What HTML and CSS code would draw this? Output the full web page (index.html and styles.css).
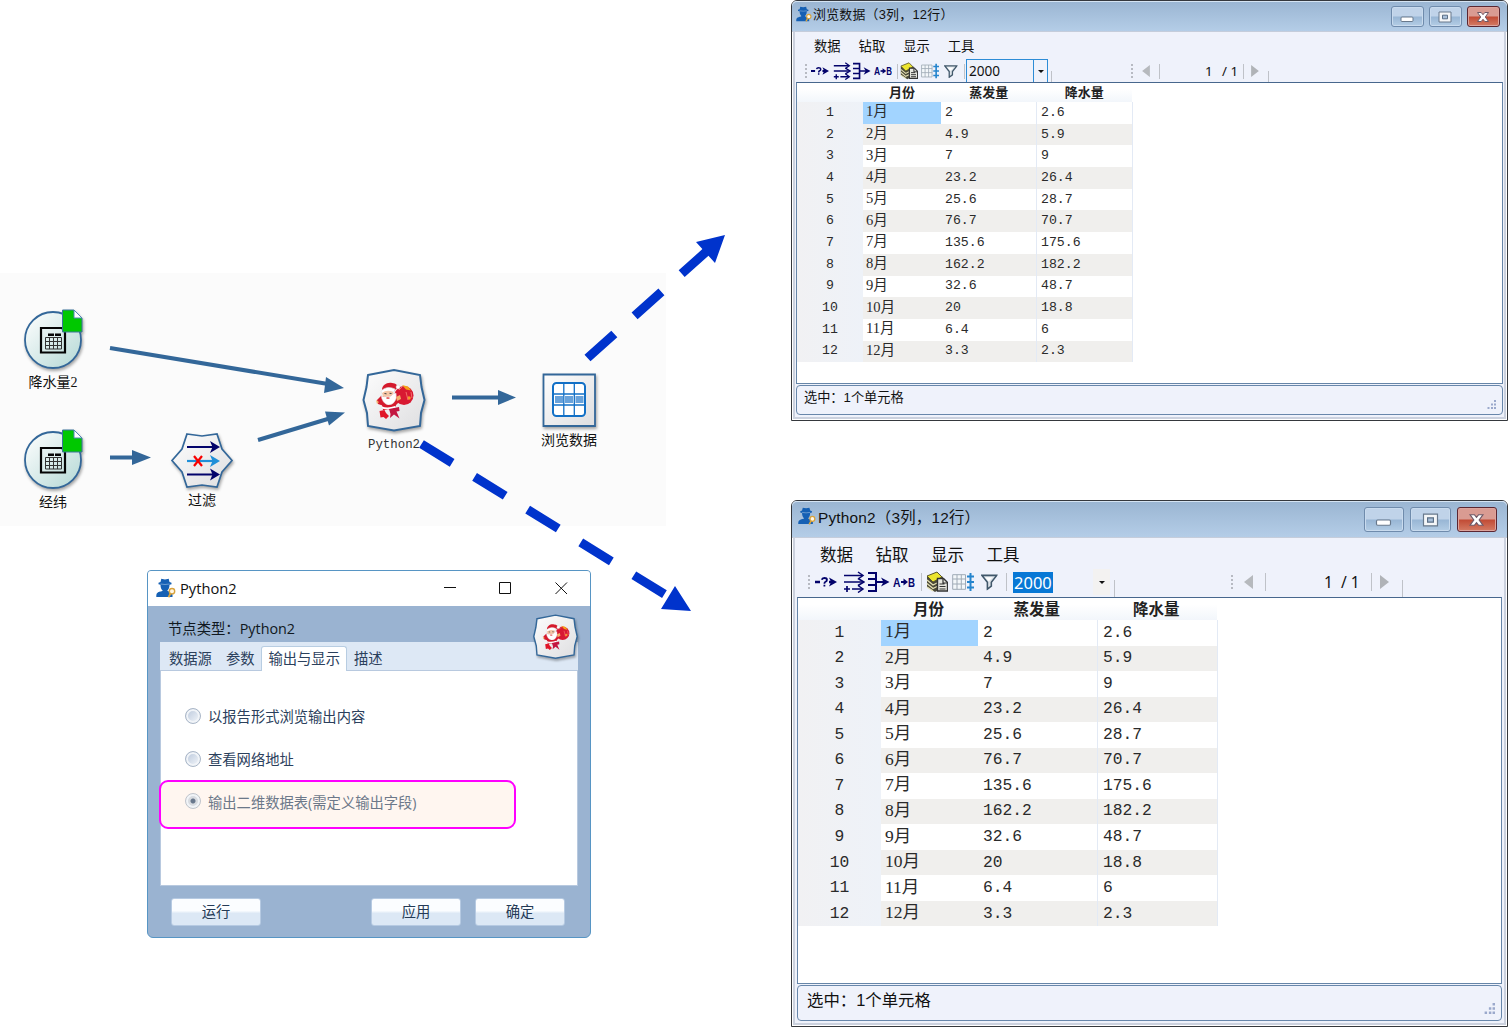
FILE: index.html
```html
<!DOCTYPE html>
<html lang="zh-CN">
<head>
<meta charset="utf-8">
<title>Python2</title>
<link rel="stylesheet" href="styles.css">
</head>
<body>
<svg class="defs" width="0" height="0" aria-hidden="true">
  <defs>
    <linearGradient id="gNode" x1="0" y1="0" x2="1" y2="1"><stop offset="0" stop-color="#fdfdfd"/><stop offset="1" stop-color="#dedee0"/></linearGradient>
    <linearGradient id="gRound" x1="0" y1="0" x2="1" y2="1"><stop offset="0.1" stop-color="#f8fbfb"/><stop offset="1" stop-color="#b4d8d5"/></linearGradient>
    <symbol id="agent" viewBox="0 0 20 20">
      <path d="M4.500 4 5.300.8 9 1.500 12.700.8l.8 3.200 2 .7v1.500l-2 .5c0 2.800-.8 4.500-2 5.600v.7c2.500.8 4.800 1.200 5 3.500V19H.3c0-4 .7-5 6.200-6v-.7c-1.200-1.100-2-2.800-2-5.600l-2-.5V4.700z" fill="#1560b4"/>
      <path d="M4.500 6q4.500 1 9 0" fill="none" stroke="#8fb6de" stroke-width=".7"/>
      <circle cx="16" cy="13.200" r="2.700" fill="#fff7e6" stroke="#d9a33c" stroke-width="1.400"/>
      <path d="m14.500 15.500-2 3.700" stroke="#d9a33c" stroke-width="1.800"/>
    </symbol>
    <symbol id="santa" viewBox="0 0 66 66">
      <path d="M7 8 33 3l26 5 1.500 12L63.500 33 60 46l-1 13-26 4.500L7 59 6 46 2.500 33 5.500 20z" fill="url(#gNode)" stroke="#336799" stroke-width="2"/>
      <circle cx="43" cy="28.500" r="9.500" fill="#d81932"/>
      <path d="m41 18 6 1.500 3 4-5-1z" fill="#f5a21a"/><circle cx="48" cy="31" r="1.800" fill="#f59a2a"/>
      <path d="m38 23 3-3M45 25l2 8M50 25l1 6" stroke="#f46b68" stroke-width="1"/>
      <path d="M21 23c0-5 5-8 10-7 4 0 6 3 7 5l-3 1-2 2zM20 29l-4 4 1 4 6 2 11 0 6-6-4-4z" fill="#d51a2d"/>
      <path d="M20 24q6-6 14-2l-1 3q-6-2-12 2z" fill="#fff" stroke="#ddd" stroke-width=".6"/>
      <path d="M21 26q5-4 11-1l1 6h-10z" fill="#f6c6a5"/>
      <path d="M20 28q3 3 6 1.500 4 1 6-2.500l3-1q1 5-1 8-2 4-7 4-6-2-7-10z" fill="#fff" stroke="#dcc" stroke-width=".5"/>
      <path d="m23.500 26.500 2 .3M28.500 26.300l2 .2" stroke="#444"/><path d="m25.500 31 3 .2" stroke="#d33" stroke-width="1.300"/>
      <circle cx="37" cy="20" r="2" fill="#fff" stroke="#ccc" stroke-width=".4"/>
      <path d="m35 30 4-2 1 4-4 2zM15 33l3 2-2 2z" fill="#f3b16e"/>
      <path d="M21 38h14l-2 5H22z" fill="#d51a2d"/>
      <path d="M21 39.500q6 2 13-.5l1 2q-8 3-14 .5z" fill="#fff"/>
      <path d="M18.500 44l5-1 1.500 3 3 3-3 3-2.500-2-3 .5z" fill="#e01628"/><path d="M28 42l10-2 .5 4-3 .5 3 7-5.500-4-4 3.500.5-4z" fill="#c31640"/>
    </symbol>
    <symbol id="source" viewBox="0 0 62 64">
      <circle cx="30" cy="33" r="28" fill="url(#gRound)" stroke="#336799" stroke-width="1.800"/>
      <path d="M18 21h24v24.500H18z" fill="none" stroke="#050505" stroke-width="2.200"/>
      <path d="M25 26.500h6v2.500h-6zM32 26.500h6v2.500h-6zM37 21h5v4z" fill="#050505"/>
      <path d="M22.500 30.500h16v11.500h-16zM22.500 34.500h16M22.500 38.500h16M26.500 30.500v11.500M30.500 30.500v11.500M34.500 30.500v11.500" fill="none" stroke="#333"/>
      <path d="M39.500 3h11.500l8 8v14h-19.500z" fill="#00c800" stroke="#3c749c"/><path d="M51 3v8h8z" fill="#fff" stroke="#4d87b4"/>
    </symbol>
    <symbol id="t1" viewBox="0 0 22 20"><path d="M0 10h5M14 10h3" stroke="#03036b" stroke-width="2.600"/><path d="M14 5.500 22 10l-8 4.500 2-4.500z" fill="#03036b"/><path d="M6.800 7.800Q7.200 6 9.300 6c3.400 0 3.400 2.800.9 4-.7.400-.8.800-.8 1.700M9.400 12.800v1.800" fill="none" stroke="#03036b" stroke-width="1.800"/></symbol>
    <symbol id="t2" viewBox="0 0 22 20"><path d="M1 3.500h18M1 10h19M9 17h10M1 17h6M4 14v6" fill="none" stroke="#03036b" stroke-width="1.700"/><path d="m15 0 5 3.500-5 3.500M15 6.500l6 3.500-6 3.500M15 13.500l5 3.500-5 3.500" fill="none" stroke="#03036b" stroke-width="1.500"/></symbol>
    <symbol id="t3" viewBox="0 0 22 20"><path d="M0 1h8v18H0M0 7h8M0 13h8M8 10h10" fill="none" stroke="#03036b" stroke-width="2"/><path d="m13 5.500 8.500 4.500-8.500 4.500 2.500-4.500z" fill="#03036b"/></symbol>
    <symbol id="t4" viewBox="0 0 22 20"><path d="M8 10h4" stroke="#03036b" stroke-width="2"/><path d="m10.500 6.500 4.500 3.500-4.500 3.500z" fill="#03036b"/><text class="ab" x="0" y="15" textLength="7.500" lengthAdjust="spacingAndGlyphs">A</text><text class="ab" x="15" y="15" textLength="7" lengthAdjust="spacingAndGlyphs">B</text></symbol>
    <symbol id="t5" viewBox="0 0 22 20"><path d="m1 5 8-4 8 4v10l-8 5-8-5z" fill="#4b4938"/><path d="m1 4 10-4 5 5-9 5z" fill="#ece52f" stroke="#59562c"/><path d="m1 8 6 5 4-2M1 11.500l6 5 4-2M1 15l6 4" fill="none" stroke="#e4dfb2" stroke-width="1.300"/><path d="M11.500 6.500h6l4 4v8.500h-10z" fill="#e6e6df" stroke="#333" stroke-width="1.400"/><path d="M17 7v4h4M13.500 12h5M13.500 14.500h6M13.500 17h6" fill="none" stroke="#333" stroke-width="1.200"/></symbol>
    <symbol id="t6" viewBox="0 0 22 20"><path d="M.7 2.700h12.800v14.600H.7zM.7 7h13M.7 12h13M5 2.700v14.600M9.300 2.700v14.600" fill="#f3f7fa" stroke="#9faab6"/><path d="M18.500 1v18M15 4.500h7M15 10h7M15 15.500h7" stroke="#2685cd" stroke-width="2"/></symbol>
    <symbol id="t7" viewBox="0 0 17 17"><path d="M1 2h15l-5.500 7v4l-4 3V9z" fill="#dce3e9" stroke="#41586b" stroke-width="1.600"/><path d="M4 4h8l-4 4z" fill="#fff"/></symbol>
    <symbol id="prev" viewBox="0 0 9 14"><path d="M9 0v14L0 7z" fill="#b6b9bd"/></symbol>
    <symbol id="next" viewBox="0 0 9 14"><path d="M0 0v14l9-7z" fill="#b0b3b7"/></symbol>
    <symbol id="min" viewBox="0 0 14 12"><rect x="1" y="6" width="12" height="4.500" rx="1" fill="#fff" stroke="#68798c"/></symbol>
    <symbol id="max" viewBox="0 0 14 12"><path d="M1 1h12v10H1z" fill="#f4f6f8" stroke="#68798c"/><path d="M4.500 4.200h5v3.600h-5z" fill="#a9c0da" stroke="#5b6f86"/></symbol>
    <symbol id="cls" viewBox="0 0 14 12"><path d="M1.500 1.500h3.700L7 3.700l1.800-2.200h3.700L9.300 6l3.200 4.500H8.800L7 8.300l-1.800 2.200H1.500L4.700 6z" fill="#fff" stroke="#6d5866"/></symbol>
    <symbol id="size" viewBox="0 0 9 9"><path d="M7 0h2v2H7zM4 3.500h2v2H4zM7 3.500h2v2H7zM.5 7h2v2h-2zM4 7h2v2H4zM7 7h2v2H7z" fill="#9ba9cc"/></symbol>
  </defs>
</svg>

<main class="desk">
  <section class="flow">
    <div class="node n-rain"><svg width="62" height="64"><use href="#source"/></svg><span>降水量2</span></div>
    <div class="node n-geo"><svg width="62" height="64"><use href="#source"/></svg><span>经纬</span></div>
    <div class="node n-filter">
      <svg width="66" height="60" viewBox="0 0 66 60"><path d="M18 3l15 2 15-2 5 15 10 11.500L53 41l-5 15-15-2-15 2-5-15L3 29.500 13 18z" fill="url(#gNode)" stroke="#336799" stroke-width="1.700"/><path d="M18 16h27M18 43.500h27" stroke="#03036b" stroke-width="2.200"/><path d="m41 10 10 6-10 6 2.500-6zM41 37.500l10 6-10 6 2.500-6z" fill="#03036b"/><path d="M18 30h27" stroke="#1f8fd8" stroke-width="2.200"/><path d="m41 24 10 6-10 6 2.500-6z" fill="#1f8fd8"/><path d="m25 25 8 10M33 25l-8 10" stroke="#f80000" stroke-width="2.200"/></svg>
      <span>过滤</span>
    </div>
    <div class="node n-python"><svg width="66" height="66"><use href="#santa"/></svg><span class="latin">Python2</span></div>
    <div class="node n-browse">
      <svg width="56" height="56" viewBox="0 0 56 56"><path d="M2.500 2.500h51.500v51.500H2.500z" fill="url(#gNode)" stroke="#336799" stroke-width="1.800"/><rect x="12" y="11" width="32" height="33" rx="3.500" fill="#fff" stroke="#1270c6" stroke-width="2"/><path d="M14 24h8v7h-8zM24 24h8v7h-8zM34.500 24h8v7h-8z" fill="#68a2da"/><path d="M12 22h32M12 33h32M22.800 11v33M33.300 11v33" stroke="#1270c6" stroke-width="1.300"/></svg>
      <span>浏览数据</span>
    </div>
  </section>

  <section class="dialog">
    <header class="d-title"><svg width="20" height="20"><use href="#agent"/></svg><h1>Python2</h1>
      <svg class="d-ctl" width="124" height="14" viewBox="0 0 124 14"><path d="M0 6.500h12M55.500 1.500h11v11h-11zM111.500 1.500 123 13M123 1.500l-11.500 11.500" fill="none" stroke="#111"/></svg>
    </header>
    <div class="d-body">
      <p class="d-type">节点类型：Python2</p>
      <nav class="tabs"><span>数据源</span><span>参数</span><span class="on">输出与显示</span><span>描述</span></nav>
      <div class="pane">
        <label class="opt"><i class="radio"></i>以报告形式浏览输出内容</label>
        <label class="opt"><i class="radio"></i>查看网络地址</label>
        <label class="opt picked"><i class="radio sel"></i>输出二维数据表(需定义输出字段)</label>
      </div>
      <footer class="d-foot"><button>运行</button><button class="apply">应用</button><button>确定</button></footer>
    </div>
    <svg class="d-badge" width="47" height="47"><use href="#santa"/></svg>
  </section>

  <section class="win small">
    <header class="w-title"><svg class="w-ico"><use href="#agent"/></svg><h2>浏览数据（3列，12行）</h2><div class="ctl"><b><svg><use href="#min"/></svg></b><b><svg><use href="#max"/></svg></b><b class="close"><svg><use href="#cls"/></svg></b></div></header>
    <nav class="menu"><span>数据</span><span>钻取</span><span>显示</span><span>工具</span></nav>
    <div class="tools">
      <i class="grip"></i><svg class="ti"><use href="#t1"/></svg><svg class="ti"><use href="#t2"/></svg><svg class="ti"><use href="#t3"/></svg><svg class="ti"><use href="#t4"/></svg><i class="sep"></i><svg class="ti"><use href="#t5"/></svg><svg class="ti"><use href="#t6"/></svg><svg class="tf"><use href="#t7"/></svg><i class="sep"></i>
      <div class="combo"><span>2000</span><i class="drop"></i></div><i class="sep low"></i><i class="grip"></i><svg class="ar"><use href="#prev"/></svg><i class="sep"></i><span>1</span><span>/ 1</span><i class="sep"></i><svg class="ar"><use href="#next"/></svg><i class="sep low"></i>
    </div>
    <div class="sheet"><table>
      <colgroup><col class="c0"><col class="c1"><col class="c2"><col class="c2"></colgroup>
      <thead><tr><th></th><th>月份</th><th>蒸发量</th><th>降水量</th></tr></thead>
      <tbody>
        <tr><th>1</th><td class="cur">1月</td><td>2</td><td>2.6</td></tr>
        <tr><th>2</th><td>2月</td><td>4.9</td><td>5.9</td></tr>
        <tr><th>3</th><td>3月</td><td>7</td><td>9</td></tr>
        <tr><th>4</th><td>4月</td><td>23.2</td><td>26.4</td></tr>
        <tr><th>5</th><td>5月</td><td>25.6</td><td>28.7</td></tr>
        <tr><th>6</th><td>6月</td><td>76.7</td><td>70.7</td></tr>
        <tr><th>7</th><td>7月</td><td>135.6</td><td>175.6</td></tr>
        <tr><th>8</th><td>8月</td><td>162.2</td><td>182.2</td></tr>
        <tr><th>9</th><td>9月</td><td>32.6</td><td>48.7</td></tr>
        <tr><th>10</th><td>10月</td><td>20</td><td>18.8</td></tr>
        <tr><th>11</th><td>11月</td><td>6.4</td><td>6</td></tr>
        <tr><th>12</th><td>12月</td><td>3.3</td><td>2.3</td></tr>
      </tbody>
    </table></div>
    <footer class="status"><span>选中：1个单元格</span><svg width="9" height="9"><use href="#size"/></svg></footer>
  </section>

  <section class="win large">
    <header class="w-title"><svg class="w-ico"><use href="#agent"/></svg><h2>Python2（3列，12行）</h2><div class="ctl"><b><svg><use href="#min"/></svg></b><b><svg><use href="#max"/></svg></b><b class="close"><svg><use href="#cls"/></svg></b></div></header>
    <nav class="menu"><span>数据</span><span>钻取</span><span>显示</span><span>工具</span></nav>
    <div class="tools">
      <i class="grip"></i><svg class="ti"><use href="#t1"/></svg><svg class="ti"><use href="#t2"/></svg><svg class="ti"><use href="#t3"/></svg><svg class="ti"><use href="#t4"/></svg><i class="sep"></i><svg class="ti"><use href="#t5"/></svg><svg class="ti"><use href="#t6"/></svg><svg class="tf"><use href="#t7"/></svg><i class="sep"></i>
      <div class="combo"><span>2000</span><i class="drop"></i></div><i class="sep low"></i><i class="grip"></i><svg class="ar"><use href="#prev"/></svg><i class="sep"></i><span>1</span><span>/ 1</span><i class="sep"></i><svg class="ar"><use href="#next"/></svg><i class="sep low"></i>
    </div>
    <div class="sheet"><table>
      <colgroup><col class="c0"><col class="c1"><col class="c2"><col class="c2"></colgroup>
      <thead><tr><th></th><th>月份</th><th>蒸发量</th><th>降水量</th></tr></thead>
      <tbody>
        <tr><th>1</th><td class="cur">1月</td><td>2</td><td>2.6</td></tr>
        <tr><th>2</th><td>2月</td><td>4.9</td><td>5.9</td></tr>
        <tr><th>3</th><td>3月</td><td>7</td><td>9</td></tr>
        <tr><th>4</th><td>4月</td><td>23.2</td><td>26.4</td></tr>
        <tr><th>5</th><td>5月</td><td>25.6</td><td>28.7</td></tr>
        <tr><th>6</th><td>6月</td><td>76.7</td><td>70.7</td></tr>
        <tr><th>7</th><td>7月</td><td>135.6</td><td>175.6</td></tr>
        <tr><th>8</th><td>8月</td><td>162.2</td><td>182.2</td></tr>
        <tr><th>9</th><td>9月</td><td>32.6</td><td>48.7</td></tr>
        <tr><th>10</th><td>10月</td><td>20</td><td>18.8</td></tr>
        <tr><th>11</th><td>11月</td><td>6.4</td><td>6</td></tr>
        <tr><th>12</th><td>12月</td><td>3.3</td><td>2.3</td></tr>
      </tbody>
    </table></div>
    <footer class="status"><span>选中：1个单元格</span><svg width="11" height="11"><use href="#size"/></svg></footer>
  </section>

  <svg class="links" width="792" height="640" viewBox="0 0 792 640">
    <g stroke="#336799" stroke-width="4" fill="#336799">
      <path d="m110 348 218 36M110 457.500h24M258 440l73-22M452 397.500h48"/>
      <g stroke="none"><path d="m326 377 18 11-20 5zM132 450l19 7.500-19 7.500zM325 411.500l20 1-16 13zM498 390l18 7.500-18 7.500z"/></g>
    </g>
    <g stroke="#0033cc" stroke-width="9" fill="#0033cc">
      <path d="m587.500 358 124-111" stroke-dasharray="36 27.200"/>
      <path d="m421.500 444 254 157" stroke-dasharray="36 26.400"/>
      <g stroke="none"><path d="m725 235-29 7 19 21zM691 611l-30-2 14-23z"/></g>
    </g>
  </svg>
</main>
</body>
</html>
```

FILE: styles.css
```css
* { box-sizing: border-box; }
body { margin: 0; background: #fff; color: #111; font-family: "Open Sans", "Noto Sans CJK SC", sans-serif; }
h1, h2, p { margin: 0; font-weight: 400; }
svg { display: block; flex: none; }
.defs { position: absolute; }
.ab { font: bold 13px "Liberation Sans", sans-serif; fill: #03036b; }
.desk { position: relative; width: 1508px; height: 1027px; overflow: hidden; }

/* node canvas */
.flow { position: absolute; left: 0; top: 273px; width: 666px; height: 253px; background: #fbfbfb; }
.node { position: absolute; display: flex; flex-direction: column; align-items: center; width: 80px; font: 14px/16px "Liberation Serif", "Noto Sans CJK SC", serif; }
.node > svg { filter: drop-shadow(1px 2px 1.500px rgba(0, 0, 0, .35)); }
.node > span { white-space: nowrap; }
.node .latin { font: 12.400px/16px "Liberation Mono", monospace; color: #333; }
.n-rain { left: 14px; top: 34px; }
.n-geo { left: 14px; top: 154px; }
.n-rain > span, .n-geo > span { margin: 4px 2px 0 0; }
.n-filter { left: 162px; top: 158px; }
.n-filter > span { margin-top: 2px; }
.n-python { left: 354px; top: 94px; }
.n-python > span { margin-top: 4px; }
.n-browse { left: 529px; top: 99px; }
.n-browse > span { margin-top: 5px; }
.links { position: absolute; left: 0; top: 0; }

/* settings dialog */
.dialog { position: absolute; left: 147px; top: 570px; width: 444px; height: 368px; border: 1px solid #5795c4; border-radius: 4px 4px 6px 6px; background: #9ab3d1; overflow: hidden; font-size: 14.300px; }
.d-title { display: flex; align-items: center; height: 35px; padding: 0 22px 1px 8px; background: #fff; }
.d-title h1 { margin-left: 4px; font-size: 14.700px; line-height: 20px; }
.d-ctl { margin-left: auto; }
.d-body { padding: 0 12px; color: #2b405c; }
.d-type { height: 36px; padding: 11px 0 0 8px; line-height: 24px; font-size: 14.350px; color: #101820; }
.tabs { display: flex; align-items: flex-end; height: 29px; padding-left: 9px; background: #dde8f5; border-bottom: 1px solid #b8c9df; }
.tabs span { height: 24px; line-height: 25px; margin-right: 14px; white-space: nowrap; }
.tabs .on { height: 25px; line-height: 24px; margin: 0 7px -1px -7px; padding: 0 6px; background: #fff; border: 1px solid #b8cde2; border-bottom: 0; border-radius: 3px 3px 0 0; }
.pane { height: 215px; padding-top: 24px; background: #fff; border: 1px solid #b8c9df; border-top: 0; }
.opt { display: flex; align-items: center; height: 43px; padding: 0 0 2px 24px; }
.radio { width: 16px; height: 16px; margin-right: 7px; border: 1px solid #a9b6c7; border-radius: 50%; background: linear-gradient(135deg, #b8c6da, #f5f8fc); box-shadow: inset 0 0 0 2px #f1f4f8; }
.radio.sel { border-color: #bfc4cc; background: radial-gradient(circle, #68778c 0 2px, #d8dbe0 3px 5px, #eee 6px); }
.picked { width: 357px; height: 49px; margin: -1px 0 0 -2px; padding: 0 0 7px 24px; border: 2px solid #f0f; border-radius: 9px; background: #fff6f0; color: #6c7889; }
.d-foot { display: flex; align-items: center; padding: 12px 1px 0 11px; }
.d-foot button { width: 90px; height: 28px; padding: 0; border: 1px solid #b6cae2; border-radius: 3px; background: linear-gradient(#fbfdff 0 45%, #dce8f5 55%); color: #243a56; font: inherit; line-height: 24px; margin-right: 14px; }
.d-foot .apply { margin-left: auto; }
.d-foot button:last-child { margin-right: 12px; }
.d-badge { position: absolute; right: 11px; top: 42px; filter: drop-shadow(1px 2px 1px rgba(0, 0, 0, .3)); }

/* data windows */
.win { position: absolute; left: 791px; width: 717px; display: flex; flex-direction: column; background: #eff2fb; border: 1px solid #35383d; border-radius: 6px 6px 0 0; box-shadow: inset 0 0 0 1px #fff, inset 0 0 0 3px #cbd1de; }
.small {
  --title: 31px; --menu: 27px; --tools: 23px; --row: 21.700px; --head: 19px; --status: 30px;
  --c0: 66px; --c1: 78px; --c2: 95.500px; --ui: 13.300px; --cell: 14.600px; --num: 13.200px; --icon: 18px;
  --gap-cell: 4px; --side: 4px;
  top: 0; height: 421px; padding-bottom: 5px;
}
.large {
  --title: 37px; --menu: 31px; --tools: 28px; --row: 25.540px; --head: 22px; --status: 36px;
  --c0: 83px; --c1: 97px; --c2: 119.500px; --ui: 16.500px; --cell: 17.500px; --num: 16.300px; --icon: 22px;
  --gap-cell: 5px; --side: 5px;
  top: 500px; height: 527px; padding-bottom: 5px;
}
.w-title { display: flex; align-items: center; flex: none; height: var(--title); border-radius: 5px 5px 0 0; background: linear-gradient(#9ab5d2, #b4cde7); box-shadow: inset 0 1px #d5e4f3; border-bottom: 1px solid #c5cddb; }
.w-title h2 { white-space: nowrap; font-family: "Liberation Sans", "Noto Sans CJK SC", sans-serif; line-height: 20px; }
.small h2 { font-size: 12.900px; margin: -2px 0 0 1px; letter-spacing: .25px; }
.large h2 { font-size: 15.400px; margin: -2px 0 0 1px; letter-spacing: .2px; }
.w-ico { width: 16px; height: 16px; margin: -5px 0 0 4px; }
.large .w-ico { width: 18px; height: 18px; margin: -7px 1px 0 6px; }
.ctl { display: flex; gap: 5.500px; margin: 1px 7.500px 0 auto; }
.large .ctl { gap: 6px; margin-right: 10px; }
.ctl b { display: flex; align-items: center; justify-content: center; width: 32.500px; height: 21px; border: 1px solid #6f8bac; border-radius: 3px; background: linear-gradient(#c0d3e9 0 48%, #98b6d5 52%, #b4cde5); box-shadow: inset 0 0 0 1px #c9dbee; }
.ctl .close { border-color: #5b2631; background: linear-gradient(#d99b92 0 48%, #c14b35 52%, #d47c65); box-shadow: inset 0 0 0 1px #dda49d; }
.ctl svg { width: 14px; height: 12px; }
.large .ctl { margin-top: 1px; }
.large .ctl b { width: 40.500px; height: 25px; }
.large .ctl svg { width: 17px; height: 14px; }
.menu { display: flex; flex: none; height: var(--menu); line-height: calc(var(--menu) + 1px); font-size: var(--ui); }
.small .menu { gap: 18px; padding-left: 22px; }
.large .menu { gap: 22.500px; padding-left: 28px; line-height: 33px; }
.tools { display: grid; flex: none; align-items: center; height: var(--tools); font: 13.300px/16px "Noto Sans", sans-serif; white-space: nowrap; }
.small .tools { padding: 0 0 4px 13px; grid-template-columns: 6px 22px 20px 21px 23px 3px 21px 23px 20px 3px 84px 80px 11px 17px 46px 17px 21px 8px 17px 8px; }
.large .tools { padding: 0 0 3px 16px; grid-template-columns: 7px 28px 25px 25px 28px 5px 26px 29px 25px 7px 101px 117px 13px 21px 59px 17px 30px 9px 22px 8px; font-size: 15.500px; }
.ti { width: var(--icon); height: var(--icon); }
.tf { width: calc(var(--icon) * .76); height: calc(var(--icon) * .8); }
.ar { width: 8px; height: 12px; }
.large .ar { width: 9px; height: 14px; }
.grip { width: 2px; height: 14px; background: repeating-linear-gradient(#b7bac2 0 2px, transparent 2px 4px); }
.sep { width: 1px; height: 15px; background: #bfc2c8; }
.large .sep { height: 18px; }
.sep.low { align-self: end; margin-bottom: -3px; }
.combo { display: flex; align-items: center; width: 82px; height: 24px; margin-left: -1px; padding-left: 2px; border: 1px solid #2d8cd6; font-size: 13.600px; }
.drop { display: flex; align-items: center; justify-content: center; align-self: stretch; width: 14px; margin-left: auto; border-left: 1px solid #2d8cd6; }
.drop::after { content: ""; border: 3px solid transparent; border-top: 3px solid #111; border-bottom: 0; }
.large .combo { width: 97px; height: 26px; padding: 0; margin: 0; border: 0; font-size: 16.500px; }
.large .combo span { height: 21px; line-height: 21px; padding: 0 1px; background: #0878d5; color: #fff; }
.large .drop { width: 17px; border: 0; background: #f3f2f1; }
.sheet { flex: 1; min-height: 0; overflow: hidden; margin: 0 var(--side); background: #fff; border: 1px solid #6685a8; border-top-color: #47678d; }
table { border-collapse: collapse; table-layout: fixed; width: calc(var(--c0) + var(--c1) + var(--c2) * 2); }
.c0 { width: var(--c0); } .c1 { width: var(--c1); } .c2 { width: var(--c2); }
th, td { padding: 0; white-space: nowrap; line-height: 16px; }
thead tr { height: var(--head); background: linear-gradient(#fff 30%, #f2f6fb); }
thead th { padding-bottom: 2px; color: #222; font: 700 calc(var(--num) - .2px)/16px "Noto Sans CJK SC", sans-serif; }
.large thead th { padding: 0 2px 2px 0; font-size: 15.500px; line-height: 19px; }
tbody tr { height: var(--row); }
tbody tr:nth-child(even) { background: #f0efed; }
tbody th { font: 400 var(--num)/16px "Liberation Mono", monospace; background: linear-gradient(90deg, #f1f1f3, #eef2f8); }
tbody th, tbody td { color: #2a2a2a; }
tbody td { padding-left: var(--gap-cell); border-right: 1px solid #e3eaf5; font: var(--num)/16px "Liberation Mono", monospace; }
tbody td:nth-child(2) { padding: 0 0 3px calc(var(--gap-cell) - 1px); border-right: 0; font: var(--cell)/16px "Liberation Serif", "Noto Sans CJK SC", serif; }
tbody td.cur { background: #a2d4ff; }
.status { display: flex; flex: none; align-items: flex-end; justify-content: space-between; height: var(--status); margin: 1px var(--side) 0; padding: 0 6px 5px 7px; border: 1.500px solid #6887ab; border-radius: 4px; font-family: "Liberation Sans", "Noto Sans CJK SC", sans-serif; font-size: 13.200px; }
.status span { align-self: flex-start; line-height: 24px; }
.large .status { font-size: 16.400px; padding-left: 9px; padding-bottom: 6px; }
.large .status span { line-height: 28px; }
```
